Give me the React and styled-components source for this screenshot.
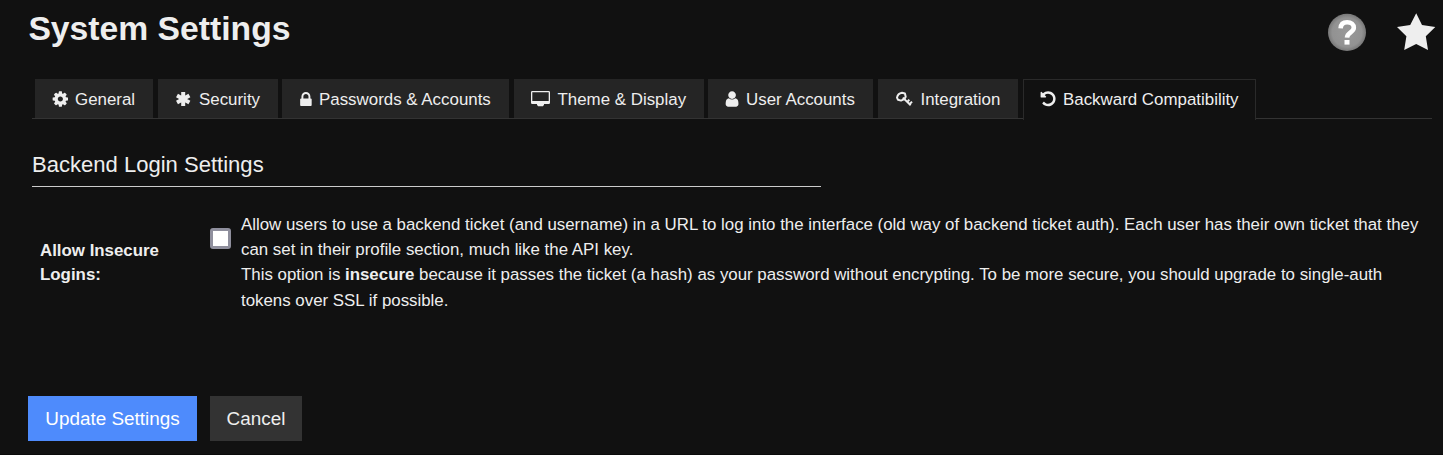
import React from "react";
import styled, { createGlobalStyle } from "styled-components";

const Global = createGlobalStyle`
  * { box-sizing: border-box; }
  body {
    margin: 0;
    background: #111;
    color: #eee;
    font-family: "Liberation Sans", Arial, sans-serif;
    font-size: 16.9px;
  }
`;

const Page = styled.main`
  height: 455px;
  overflow: hidden;
  background: #111;
  border-bottom: 1px solid #0a0a0a;
`;

const Header = styled.header`
  display: flex;
  justify-content: space-between;
  align-items: flex-start;
  height: 79px;
  padding: 9px 7.5px 0 28.4px;
`;

const Title = styled.h1`
  margin: 0;
  font-size: 33.7px;
  line-height: 39px;
`;

const Actions = styled.div`
  display: flex;
  gap: 30px;
  padding-top: 4px;
`;

const Tabs = styled.nav`
  display: flex;
  align-items: flex-start;
  height: 40px;
  margin: 0 11px 0 32px;
  padding-left: 3px;
  border-bottom: 1px solid #333;
`;

const Tab = styled.a`
  display: flex;
  flex: none;
  align-items: flex-start;
  width: ${(p) => p.$width}px;
  height: ${(p) => (p.$active ? 41 : 39)}px;
  margin-right: ${(p) => p.$gap}px;
  padding: ${(p) => (p.$active ? "10px 0 0 16px" : "11px 0 0 17px")};
  background: ${(p) => (p.$active ? "#111" : "#252525")};
  border: ${(p) => (p.$active ? "1px solid #2a2a2a" : "0")};
  border-bottom: 0;
  white-space: nowrap;
  line-height: 20px;
`;

const IconSlot = styled.span`
  display: flex;
  flex: none;
  width: ${(p) => p.$width}px;
  height: 18px;
`;

const Section = styled.section`
  padding: 32px 11px 0 32px;
`;

const Heading = styled.h2`
  width: 789px;
  height: 36px;
  margin: 0;
  border-bottom: 1px solid #ccc;
  font-size: 22.05px;
  font-weight: 400;
  line-height: 27px;
`;

const Setting = styled.div`
  display: flex;
  align-items: flex-start;
  padding: 25px 0 0 8px;
`;

const Label = styled.label`
  flex: none;
  width: 170px;
  padding-top: 27px;
  font-size: 16.88px;
  font-weight: 700;
  line-height: 24px;
`;

const Checkbox = styled.input`
  appearance: none;
  flex: none;
  width: 21px;
  height: 21px;
  margin: 16px 10px 0 0;
  background: #fff;
  border: 3px solid #8f8f9d;
  border-radius: 3px;
`;

const Description = styled.p`
  margin: 0;
  font-size: 16.88px;
  line-height: 25.2px;
  white-space: nowrap;
`;

const Buttons = styled.div`
  display: flex;
  gap: 13px;
  padding: 83px 0 0 28px;
`;

const Button = styled.button`
  width: ${(p) => p.$width}px;
  height: 45px;
  padding: 2px 0 0;
  border: 0;
  background: ${(p) => (p.$primary ? "#4e8bfc" : "#333")};
  color: ${(p) => (p.$primary ? "#fff" : "#eee")};
  font: 18.9px "Liberation Sans", Arial, sans-serif;
`;

const svg = (w, h, viewBox, children) => (
  <svg width={w} height={h} viewBox={viewBox} fill="#eee">
    {children}
  </svg>
);

const gear = svg(16, 18, "64 0 1592 1791", <path d="M1152 896q0-106-75-181t-181-75-181 75-75 181 75 181 181 75 181-75 75-181zm512-109v222q0 12-8 23t-20 13l-185 28q-19 54-39 91 35 50 107 138 10 12 10 25t-9 23q-27 37-99 108t-94 71q-12 0-26-9l-138-108q-44 23-91 38-16 136-29 186-7 28-36 28h-222q-14 0-24.5-8.5t-11.5-21.5l-28-184q-49-16-90-37l-141 107q-10 9-25 9-14 0-25-11-126-114-165-168-7-10-7-23 0-12 8-23 15-21 51-66.5t54-70.5q-27-50-41-99l-183-27q-13-2-21-12.5t-8-23.5v-222q0-12 8-23t19-13l186-28q14-46 39-92-40-57-107-138-10-12-10-24 0-10 9-23 26-36 98.5-107.5t94.5-71.5q13 0 26 10l138 107q44-23 91-38 16-136 29-186 7-28 36-28h222q14 0 24.5 8.5t11.5 21.5l28 184q49 16 90 37l142-107q9-9 24-9 13 0 25 10 129 119 165 170 7 8 7 22 0 12-8 23-15 21-51 66.5t-54 70.5q26 50 41 98l183 28q13 2 21 12.5t8 23.5z" />);

const asterisk = svg(16, 18, "0 0 16 18", (
  <g stroke="#eee" strokeWidth="4">
    <path d="M8.2 2v14M2 5.5l12.4 7M14.4 5.5l-12.4 7" />
  </g>
));

const lock = svg(13, 18, "230 -72 1248 1800", <path d="M640 768h512v-192q0-106-75-181t-181-75-181 75-75 181v192zm832 96v576q0 40-28 68t-68 28h-960q-40 0-68-28t-28-68v-576q0-40 28-68t68-28h32v-192q0-184 132-316t316-132 316 132 132 316v192h32q40 0 68 28t28 68z" />);

const display = svg(19, 18, "0 0 19 18", (
  <path fillRule="evenodd" d="M1.3 1h16.4Q19 1 19 2.3v10.4q0 1.3-1.3 1.3H13v1.4h-1v.8H7v-.8H6V14H1.3Q0 14 0 12.7V2.3Q0 1 1.3 1zM1.3 2.2v8.9h16.4V2.2z" />
));

const user = svg(14, 18, "190 0 1400 1800", <path d="M1536 1399q0 109-62.5 187t-150.5 78h-854q-88 0-150.5-78t-62.5-187q0-85 8.5-160.5t31.5-152 58.5-131 94-89 134.5-34.5q131 128 313 128t313-128q76 0 134.5 34.5t94 89 58.5 131 31.5 152 8.5 160.5zm-256-887q0 159-112.5 271.5t-271.5 112.5-271.5-112.5-112.5-271.5 112.5-271.5 271.5-112.5 271.5 112.5 112.5 271.5z" />);

const key = svg(18, 18, "0 0 18 18", (
  <g fill="none" stroke="#eee" strokeWidth="2" strokeLinejoin="round">
    <path d="M2 7.6Q2.8 3.6 7 2.8l2.9.7.8 3.2-1.4 2.5-3.3 1.4-3-.8z" />
    <path d="M7.8 7.6l7.9 7.6M12.2 12l2.1-2.4M14.5 14.2l2.5-2.6" />
  </g>
));

const rotateLeft = svg(16, 18, "-60 0 1638 1843", <path d="M1536 896q0 156-61 298t-164 245-245 164-298 61q-172 0-327-72.5t-264-204.5q-7-10-6.5-22.5t8.5-20.5l137-138q10-9 25-9 16 2 23 12 73 95 179 147t225 52q104 0 198.5-40.5t163.5-109.5 109.5-163.5 40.5-198.5-40.5-198.5-109.5-163.5-163.5-109.5-198.5-40.5q-98 0-188 35.5t-160 101.5l137 138q31 30 14 69-17 40-59 40h-448q-26 0-45-19t-19-45v-448q0-42 40-59 39-17 69 14l130 129q107-101 244.5-156.5t284.5-55.5q156 0 298 61t245 164 164 245 61 298z" />);

const tabs = [
  { label: "General", icon: gear, width: 118, gap: 5, slot: 23 },
  { label: "Security", icon: asterisk, width: 120, gap: 4, slot: 24 },
  { label: "Passwords & Accounts", icon: lock, width: 227, gap: 5, slot: 20 },
  { label: "Theme & Display", icon: display, width: 190, gap: 4, slot: 26.5 },
  { label: "User Accounts", icon: user, width: 165, gap: 5, slot: 21 },
  { label: "Integration", icon: key, width: 140, gap: 5, slot: 25.5 },
  { label: "Backward Compatibility", icon: rotateLeft, width: 233, gap: 0, slot: 23, active: true },
];

const HelpIcon = () => (
  <svg width="39" height="39" viewBox="0 0 39 39">
    <defs>
      <radialGradient id="help">
        <stop offset="0" stopColor="#999" />
        <stop offset="0.78" stopColor="#929292" />
        <stop offset="1" stopColor="#777" />
      </radialGradient>
    </defs>
    <ellipse cx="19" cy="19.4" rx="19" ry="18.6" fill="url(#help)" />
    <path d="M12.6 15.4c.2-4.4 2.7-6.2 6.5-6.2 4.2 0 6.7 2.1 6.7 5.6 0 4.5-6.6 4.7-6.8 9.8" fill="none" stroke="#fff" strokeWidth="4.6" />
    <path d="M16.5 27h5v4.6h-5z" fill="#fff" />
  </svg>
);

const StarIcon = () => (
  <svg width="39" height="38" viewBox="0 0 39 38">
    <path d="M19.2.2 25 12 38.3 14l-9.5 9.3L31 37 19.2 31 7.2 37l2.2-13.7L0 14 13.2 12z" fill="#eee" />
  </svg>
);

export default function App() {
  return (
    <Page>
      <Global />
      <Header>
        <Title>System Settings</Title>
        <Actions>
          <HelpIcon />
          <StarIcon />
        </Actions>
      </Header>
      <Tabs>
        {tabs.map((t) => (
          <Tab key={t.label} $width={t.width} $gap={t.gap} $active={t.active}>
            <IconSlot $width={t.slot}>{t.icon}</IconSlot>
            {t.label}
          </Tab>
        ))}
      </Tabs>
      <Section>
        <Heading>Backend Login Settings</Heading>
        <Setting>
          <Label htmlFor="insecure">Allow Insecure<br />Logins:</Label>
          <Checkbox id="insecure" type="checkbox" />
          <Description>
            Allow users to use a backend ticket (and username) in a URL to log into the interface (old way of backend ticket auth). Each user has their own ticket that they<br />
            can set in their profile section, much like the API key.<br />
            This option is <strong>insecure</strong> because it passes the ticket (a hash) as your password without encrypting. To be more secure, you should upgrade to single-auth<br />
            tokens over SSL if possible.
          </Description>
        </Setting>
      </Section>
      <Buttons>
        <Button $primary $width={169}>Update Settings</Button>
        <Button $width={92}>Cancel</Button>
      </Buttons>
    </Page>
  );
}
